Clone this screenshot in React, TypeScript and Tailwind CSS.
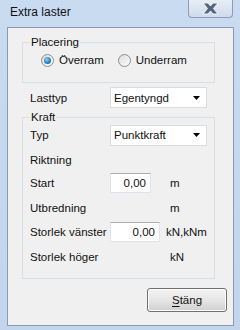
import React from "react";

const font = "font-['Liberation_Sans',Arial,sans-serif]";

function Radio({ checked, label }: { checked?: boolean; label: string }) {
  return (
    <label className="flex items-center gap-[5px]">
      <span className="flex h-[13px] w-[13px] items-center justify-center rounded-full border border-[#8f8f8f] bg-gradient-to-br from-[#dcdcdc] to-[#fdfdfd]">
        {checked && (
          <span className="h-[7px] w-[7px] rounded-full bg-[radial-gradient(circle_at_40%_35%,#8ed0f8,#2a79b8_60%,#175a94)]" />
        )}
      </span>
      <span>{label}</span>
    </label>
  );
}

function Combo({ value }: { value: string }) {
  return (
    <div className="flex h-[21px] w-[97px] items-center justify-between border border-[#dadcde] bg-white pl-[3px] pr-[6px]">
      <span>{value}</span>
      <svg width="7" height="4" viewBox="0 0 7 4">
        <path d="M0 0h7L3.5 4z" fill="#000" />
      </svg>
    </div>
  );
}

function NumInput({ w }: { w: string }) {
  return (
    <div
      className={`flex h-[20px] ${w} items-center justify-end border border-[#e2e3ea] border-t-[#abadb3] bg-white pr-[4px]`}
    >
      0,00
    </div>
  );
}

export default function App() {
  return (
    <div
      className={`${font} flex h-[330px] w-[240px] flex-col bg-gradient-to-b from-[#c9dbf1] to-[#c2d5ec] text-[11.5px] leading-[14px] text-[#111]`}
    >
      <div className="relative flex h-[27px] shrink-0 items-start">
        <span className="ml-[10px] mt-[5px] text-[12px]">Extra laster</span>
        <div className="absolute left-[188px] top-0 flex h-[18px] w-[45px] items-center justify-center rounded-b-[4px] border border-t-0 border-[#8d9db5] bg-gradient-to-b from-[#e8eef7] to-[#cddbee]">
          <svg width="17" height="13" viewBox="0 0 17 13">
            <path
              d="M1 1h5L8.5 4 11 1h5L11.5 6.5 16 12h-5L8.5 9 6 12H1l4.5-5.5z"
              fill="#55657b"
              stroke="#f3f6fb"
              strokeWidth="1"
              strokeLinejoin="round"
            />
          </svg>
        </div>
      </div>

      <div className="ml-[7px] flex h-[299px] w-[227px] flex-col border border-[#8a9ab0] bg-[#f0f0f0]">
        <fieldset className="ml-[14px] mt-[7px] h-[48px] w-[193px] border border-[#d5dfe5] px-[8px]">
          <legend className="ml-[-1px] px-[1px]">Placering</legend>
          <div className="ml-[10px] mt-[4px] flex gap-[14px]">
            <Radio checked label="Överram" />
            <Radio label="Underram" />
          </div>
        </fieldset>

        <div className="ml-[22px] mt-[4px] flex h-[21px] items-center">
          <span className="w-[80px]">Lasttyp</span>
          <Combo value="Egentyngd" />
        </div>

        <fieldset className="ml-[14px] mt-[2px] h-[169px] w-[193px] border border-[#d5dfe5] px-[7px]">
          <legend className="ml-[0px] px-[1px]">Kraft</legend>
          <div className="flex h-[22px] items-center">
            <span className="w-[80px]">Typ</span>
            <Combo value="Punktkraft" />
          </div>
          <div className="flex h-[27px] items-center">Riktning</div>
          <div className="flex h-[20px] items-center">
            <span className="w-[80px]">Start</span>
            <NumInput w="w-[41px]" />
            <span className="ml-[19px]">m</span>
          </div>
          <div className="flex h-[29px] items-center">
            <span className="w-[140px]">Utbredning</span>
            <span>m</span>
          </div>
          <div className="flex h-[20px] items-center">
            <span className="w-[80px]">Storlek vänster</span>
            <NumInput w="w-[50px]" />
            <span className="ml-[6px]">kN,kNm</span>
          </div>
          <div className="flex h-[30px] items-center">
            <span className="w-[140px]">Storlek höger</span>
            <span>kN</span>
          </div>
        </fieldset>

        <div className="mt-[9px] flex justify-end pr-[6px]">
          <button className="flex h-[24px] w-[80px] items-center justify-center rounded-[3px] border border-[#707070] bg-gradient-to-b from-[#f3f3f3] via-[#e6e6e6] via-50% to-[#d0d0d0] shadow-[inset_0_0_0_1px_#fcfcfc]">
            <span>
              <span className="underline underline-offset-2">S</span>täng
            </span>
          </button>
        </div>
      </div>
    </div>
  );
}
